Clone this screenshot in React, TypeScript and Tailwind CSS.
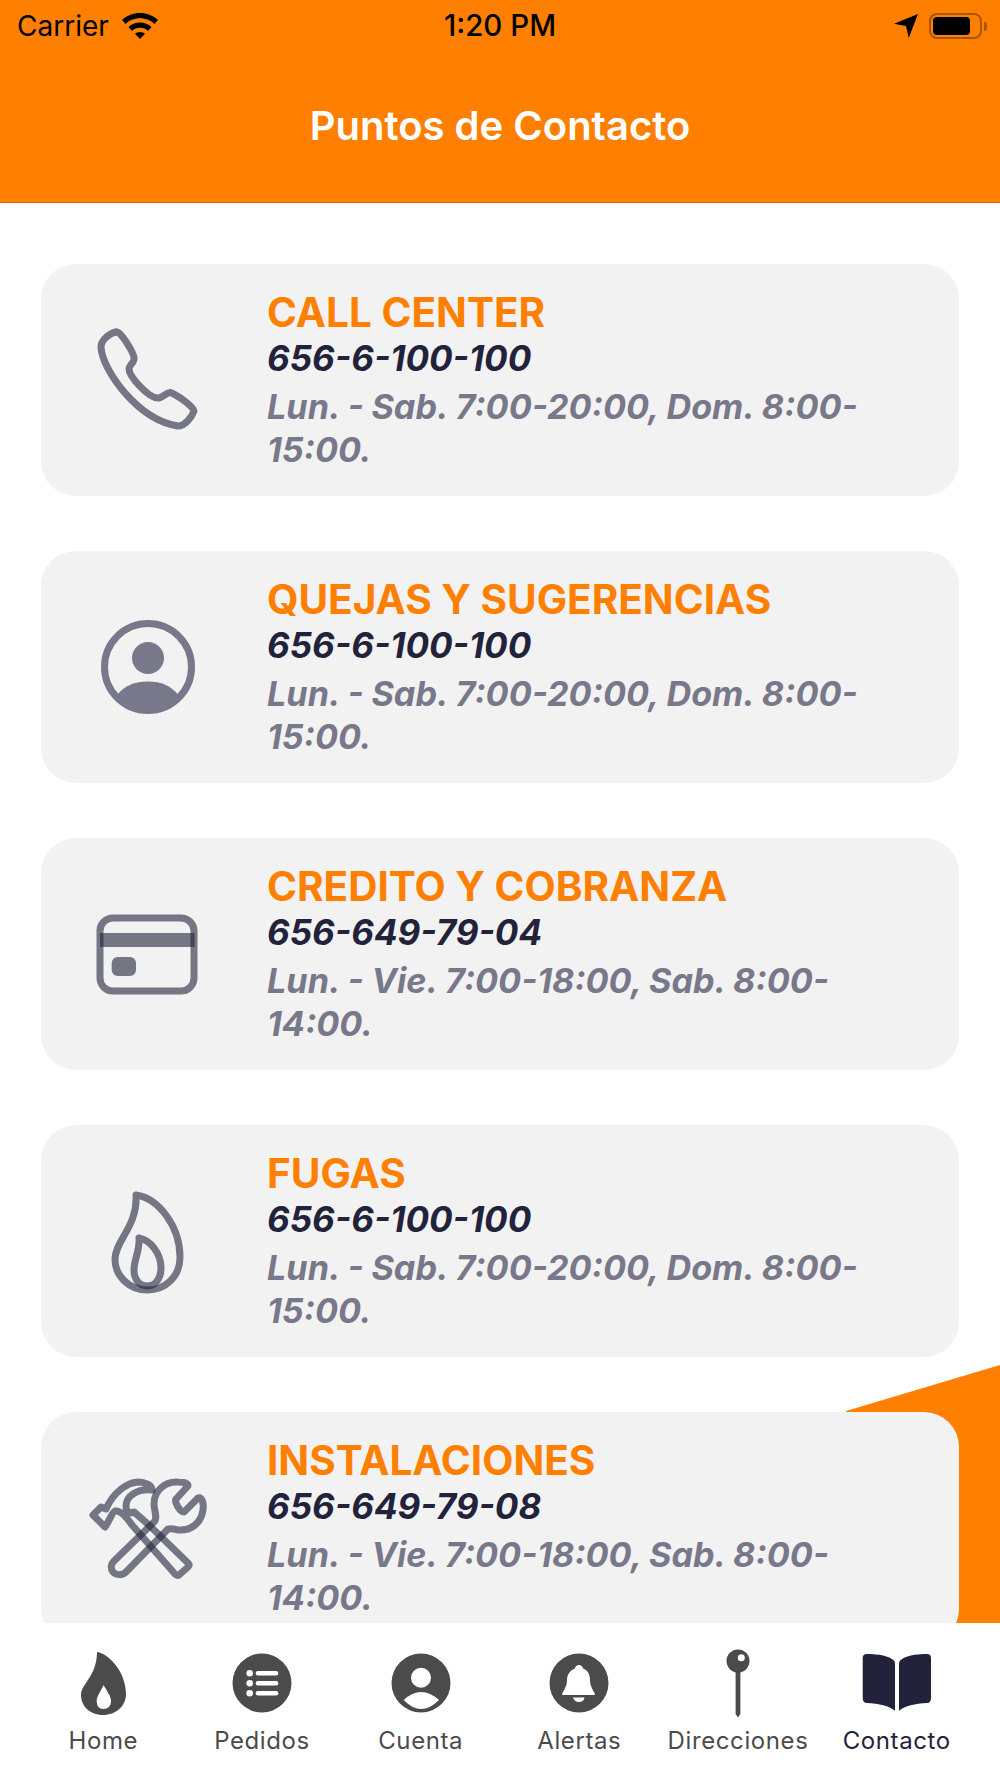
type Contact = {
  title: string;
  phone: string;
  hours: string;
  icon: React.ReactNode;
};

const iconStroke = { fill: 'none', stroke: '#22233b', strokeWidth: 7, strokeOpacity: 0.6, strokeLinejoin: 'round' as const };

function IconBox({ children }: { children: React.ReactNode }) {
  return (
    <svg viewBox="0 0 120 120" className="h-[120px] w-[120px] shrink-0">
      {children}
    </svg>
  );
}

const PhoneIcon = (
  <IconBox>
    <path
      {...iconStroke}
      d="M28.7 11.7C22 13 13 20 13 27C14 50 50 100 90 106C97 106 104 97 106 91C106 87 88 74 82 72.5C78 73 74 78 70 78C60 78 41 56 41 49C41 45 47 42 46 38C46 33 33 12 28.7 11.7Z"
    />
  </IconBox>
);

const PersonIcon = (
  <IconBox>
    <circle cx="60" cy="60" r="43.5" fill="none" stroke="#78788a" strokeWidth="7" />
    <circle cx="60" cy="51" r="16" fill="#78788a" />
    <path d="M30 87C36 79 47 74.5 60 74.5C73 74.5 83 79 89.5 87L90 90A43 43 0 0 1 30 90Z" fill="#78788a" />
  </IconBox>
);

const CardIcon = (
  <IconBox>
    <rect {...iconStroke} x="12" y="24" width="94" height="73" rx="13" />
    <rect x="12" y="39" width="94.5" height="14" fill="#22233b" fillOpacity="0.6" />
    <rect x="23.7" y="63" width="24.3" height="19" rx="6" fill="#22233b" fillOpacity="0.6" />
  </IconBox>
);

const FlameIcon = (
  <IconBox>
    <path {...iconStroke} d="M48 14C70 17 92 45 92 76C92 96 77 109 59.5 109C41 109 27 95 27 78C27 60 50 45 48 14Z" />
    <path {...iconStroke} d="M51 57C62 59 73 72 73 87C73 98 67 105 59.5 105C51 105 46 98 46 89C46 78 52 70 51 57Z" />
  </IconBox>
);

const ToolsIcon = (
  <IconBox>
    <path
      {...iconStroke}
      d="M5 47L13 39L18 41C25 25 38 15 50 14C57 14 64 17 64 22C50 20 38 28 38 38C38 44 42 46 46 44L62 58L100 95Q102 97 100 99L91 107Q89 108 87 106L44 57C38 48 32 42 27 43C24 44 22 52 17 59Z"
    />
    <path
      {...iconStroke}
      d="M26 93L66 54C70 50 66 42 66 36C66 22 78 13 90 14C95 14 100 15 100 18L88 31C86 34 92 44 96 44L110 30C114 28 116 36 115 42C113 56 102 63 90 62C86 61 83 60 80 61L38 104C34 108 28 107 25 104C22 100 23 96 26 93Z"
    />
  </IconBox>
);

const contacts: Contact[] = [
  { title: 'CALL CENTER', phone: '656-6-100-100', hours: 'Lun. - Sab. 7:00-20:00, Dom. 8:00-15:00.', icon: PhoneIcon },
  { title: 'QUEJAS Y SUGERENCIAS', phone: '656-6-100-100', hours: 'Lun. - Sab. 7:00-20:00, Dom. 8:00-15:00.', icon: PersonIcon },
  { title: 'CREDITO Y COBRANZA', phone: '656-649-79-04', hours: 'Lun. - Vie. 7:00-18:00, Sab. 8:00-14:00.', icon: CardIcon },
  { title: 'FUGAS', phone: '656-6-100-100', hours: 'Lun. - Sab. 7:00-20:00, Dom. 8:00-15:00.', icon: FlameIcon },
  { title: 'INSTALACIONES', phone: '656-649-79-08', hours: 'Lun. - Vie. 7:00-18:00, Sab. 8:00-14:00.', icon: ToolsIcon },
];

function ContactCard({ contact }: { contact: Contact }) {
  return (
    <div className="relative flex h-[232px] shrink-0 items-center rounded-[35px] bg-[#f2f2f2] pl-[47px] pr-[60px]">
      {contact.icon}
      <div className="ml-[59px] min-w-0 flex-1 pt-[1px]">
        <p className="text-[40.5px] font-bold leading-[45px] text-[#ff8000]">{contact.title}</p>
        <p className="text-[35px] font-bold italic leading-[46px] text-[#22233b]">{contact.phone}</p>
        <p className="mt-[4px] text-[34.2px] font-bold italic leading-[43px] text-[#78788a]">{contact.hours}</p>
      </div>
    </div>
  );
}

function StatusBar() {
  return (
    <div className="grid h-[52px] grid-cols-3 items-center px-[17px] text-[28px] leading-none text-black">
      <div className="flex items-center gap-[13px]">
        <span>Carrier</span>
        <svg viewBox="0 0 36 26" className="h-[26px] w-[36px]">
          <path d="M18 0C25 0 31.500 2.700 36 7L32.500 11C29 7.500 23.800 5.300 18 5.300C12.200 5.300 7 7.500 3.500 11L0 7C4.500 2.700 11 0 18 0Z" />
          <path d="M18 9.500C22.500 9.500 26.500 11.200 29.500 14L26 18C24 16 21.200 14.800 18 14.800C14.800 14.800 12 16 10 18L6.500 14C9.500 11.200 13.500 9.500 18 9.500Z" />
          <path d="M18 19C20 19 21.800 19.700 23 20.800L18 26L13 20.800C14.200 19.700 16 19 18 19Z" />
        </svg>
      </div>
      <span className="whitespace-nowrap text-center text-[29.5px] font-medium">1:20 PM</span>
      <div className="-mr-[4px] flex items-center justify-end">
        <svg viewBox="0 0 22 22" className="mr-[11px] h-[24px] w-[24px]">
          <path d="M22 0L13.500 22L11 11L0 9Z" />
        </svg>
        <div className="flex h-[26px] w-[53px] items-center rounded-[8px] border-2 border-[#a85500] p-[2px]">
          <div className="h-full w-[37px] rounded-[4px] bg-black" />
        </div>
        <div className="ml-[2px] h-[9px] w-[3px] rounded-r-full bg-[#a85500]" />
      </div>
    </div>
  );
}

function TabIcon({ children }: { children: React.ReactNode }) {
  return (
    <svg viewBox="0 0 70 70" className="h-[70px] w-[70px]">
      {children}
    </svg>
  );
}

const tabs = [
  {
    label: 'Home',
    icon: (
      <TabIcon>
        <path d="M29 4C42 6 58 25 58 46C58 58 48 67 35 67C22 67 13 58 13 47C13 36 29 28 29 4Z" fill="#4b4b4b" />
        <path d="M35.500 37C39 43 43 48 43 53C43 58 40 61 35.500 61C31 61 28.700 58 28.700 53C28.700 48 33 43 35.500 37Z" fill="#fff" />
      </TabIcon>
    ),
  },
  {
    label: 'Pedidos',
    icon: (
      <TabIcon>
        <circle cx="35" cy="35" r="29.500" fill="#4b4b4b" />
        {[25.3, 35.3, 45.3].map((y) => (
          <g key={y} fill="#fff">
            <circle cx="22.700" cy={y} r="3.300" />
            <rect x="28.700" y={y - 2.2} width="22.600" height="4.400" rx="2.200" />
          </g>
        ))}
      </TabIcon>
    ),
  },
  {
    label: 'Cuenta',
    icon: (
      <TabIcon>
        <circle cx="35" cy="35" r="29.500" fill="#4b4b4b" />
        <circle cx="35" cy="29.700" r="10" fill="#fff" />
        <path d="M17.700 52Q35 36 53 52Q35 70 17.700 52Z" fill="#fff" />
      </TabIcon>
    ),
  },
  {
    label: 'Alertas',
    icon: (
      <TabIcon>
        <circle cx="35" cy="35" r="29.500" fill="#4b4b4b" />
        <path
          d="M35 17C37.500 17 39 19 39 20.500C44 22 46 27 46 32C46 38 49 42 51 46Q51 47 50 47H19Q18 47 18 46C20 42 23 38 23 32C23 27 26 22 31 20.500C31 19 32.500 17 35 17Z"
          fill="#fff"
        />
        <path d="M29 49.500H40.500C40 52.500 38 54 35 54C32 54 30 52.500 29 49.500Z" fill="#fff" />
      </TabIcon>
    ),
  },
  {
    label: 'Direcciones',
    icon: (
      <TabIcon>
        <path d="M32.600 13H37.400V66L35 69.500L32.600 66Z" fill="#4b4b4b" />
        <circle cx="35" cy="13" r="11.500" fill="#4b4b4b" />
        <circle cx="38.300" cy="9.700" r="3.500" fill="#fff" />
      </TabIcon>
    ),
  },
  {
    label: 'Contacto',
    active: true,
    icon: (
      <TabIcon>
        <path d="M0.700 10Q0.700 6 4.700 6C17 6 27 8 32 12.500Q33 14 33 16V62.700C27 58 17 55.500 5 55Q0.700 55 0.700 50Z" fill="#22233b" />
        <path d="M37 16Q37 14 38 12.500C43 8 53 6 65 6Q69 6 69 10V50Q69 55 65 55C53 55.500 43 58 37 62.700Z" fill="#22233b" />
      </TabIcon>
    ),
  },
];

export default function App() {
  return (
    <div className="flex h-[1778px] w-[1000px] flex-col overflow-hidden bg-white font-['Inter',sans-serif]">
      <header className="h-[203px] shrink-0 border-b border-[#c96a08] bg-[#ff8000]">
        <StatusBar />
        <h1 className="mt-[46px] text-center text-[40px] font-semibold leading-[56px] text-white">Puntos de Contacto</h1>
      </header>

      <main className="relative min-h-0 flex-1 overflow-hidden">
        <div className="absolute bottom-0 right-0 h-[258px] w-[154px] bg-[#ff8000] [clip-path:polygon(0_46px,100%_0,100%_100%,0_100%)]" />
        <div className="relative flex flex-col gap-[55px] pl-[41px] pr-[41px] pt-[61px]">
          {contacts.map((contact) => (
            <ContactCard key={contact.title} contact={contact} />
          ))}
        </div>
      </main>

      <nav className="flex h-[155px] shrink-0 bg-white px-[24px] pt-[25px]">
        {tabs.map((tab) => (
          <div key={tab.label} className="flex min-w-0 flex-1 flex-col items-center">
            {tab.icon}
            <span className={`mt-[5px] whitespace-nowrap text-[24px] leading-[36px] tracking-[0.6px] ${tab.active ? 'text-[#22233b]' : 'text-[#4b4b4b]'}`}>
              {tab.label}
            </span>
          </div>
        ))}
      </nav>
    </div>
  );
}
